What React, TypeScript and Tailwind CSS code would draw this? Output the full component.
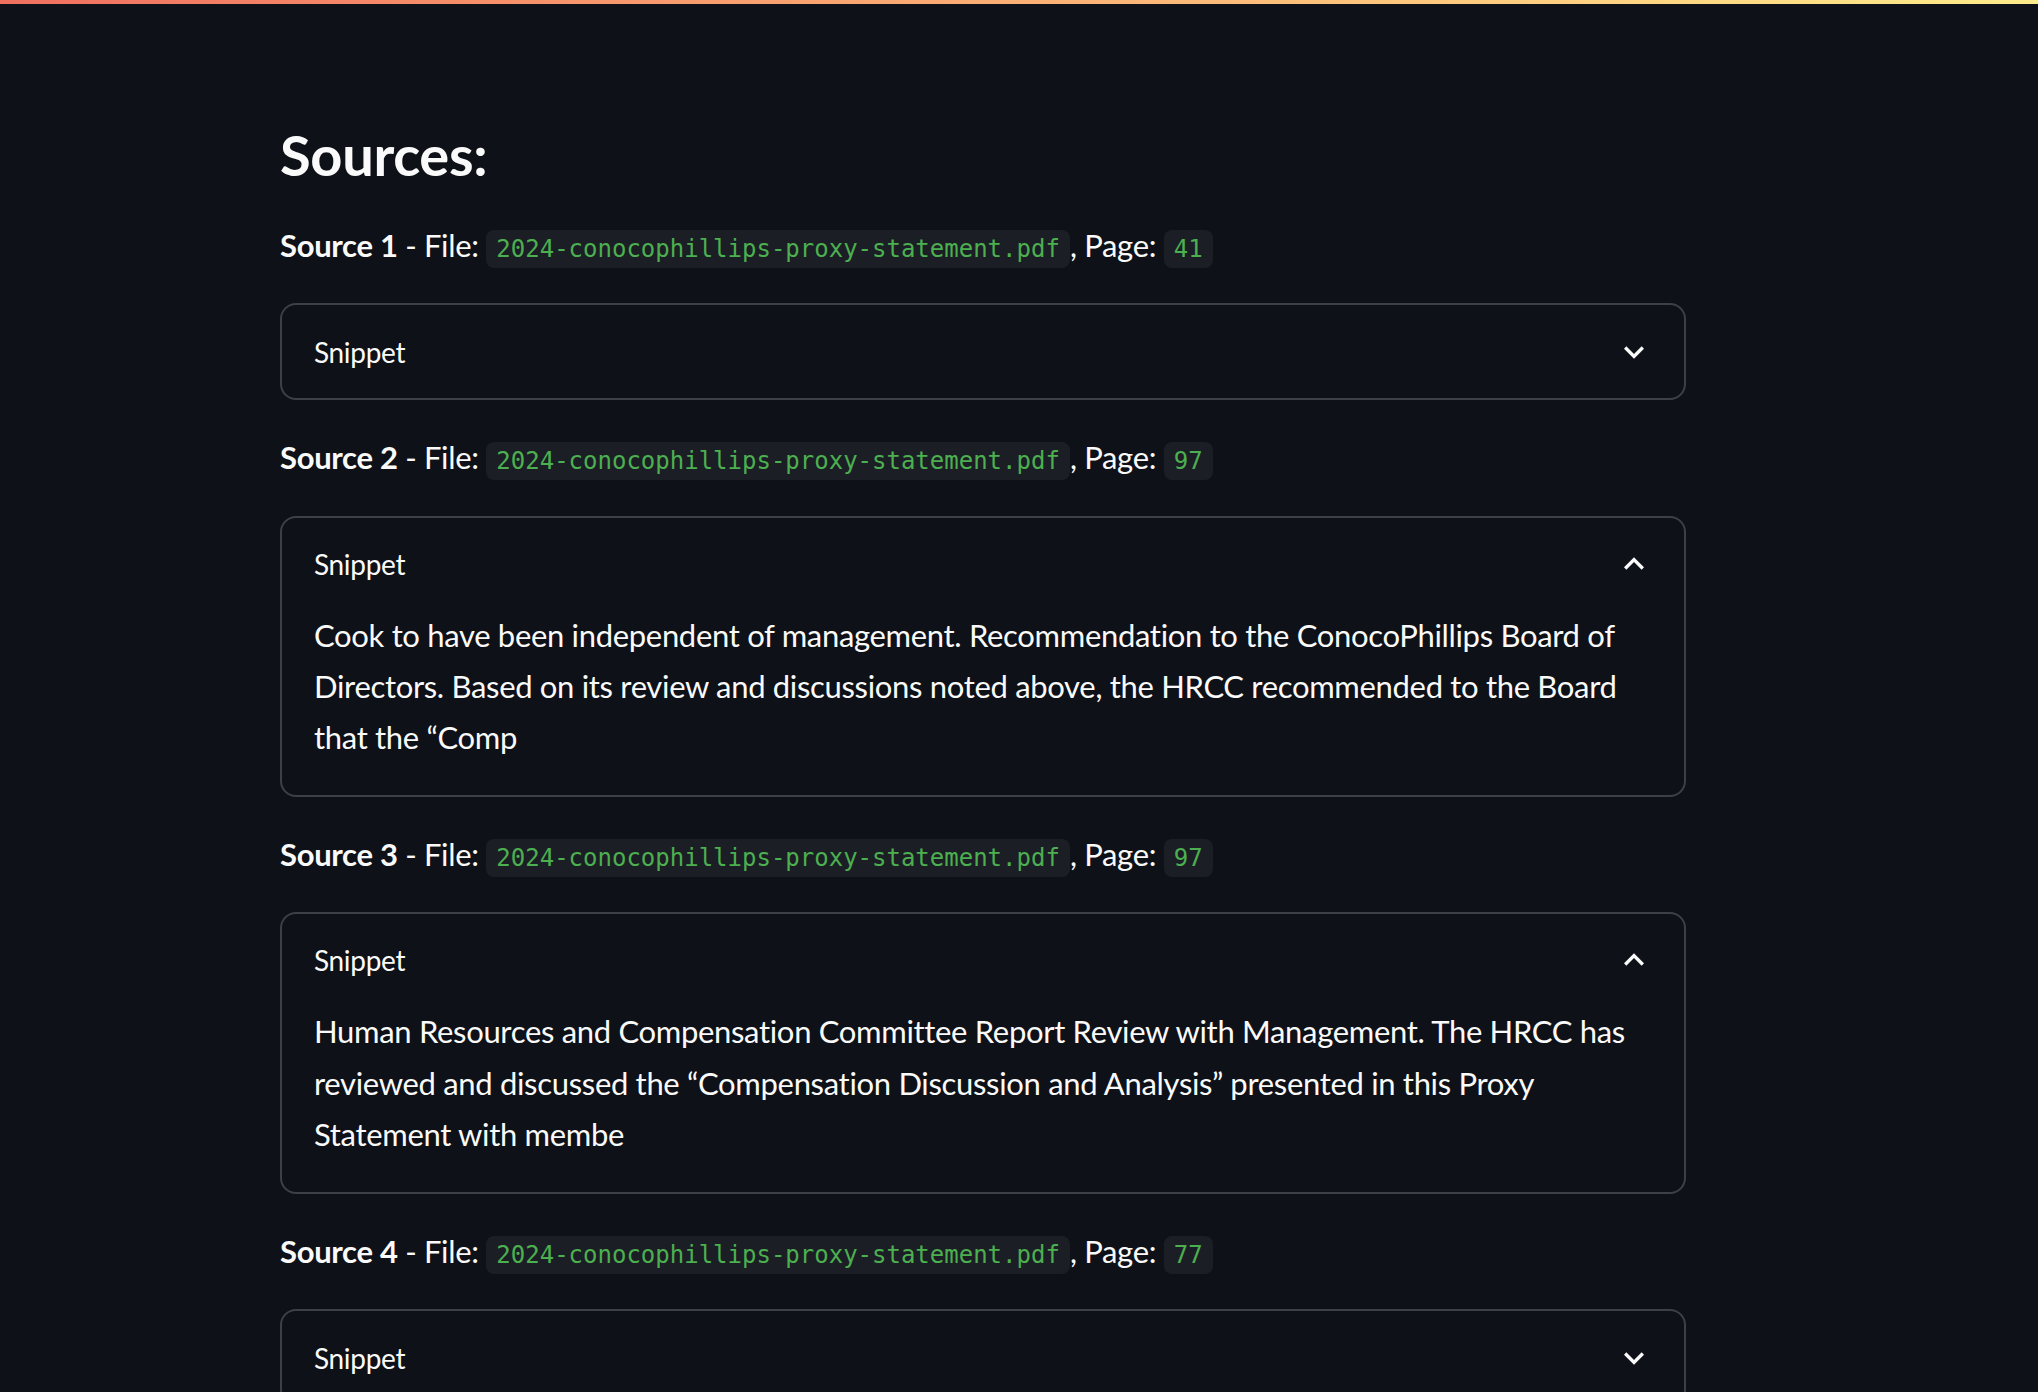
type Source = {
    page: string
    open: boolean
    text?: string
}

const FILE = '2024-conocophillips-proxy-statement.pdf'

const sources: Source[] = [
    { page: '41', open: false },
    {
        page: '97',
        open: true,
        text: 'Cook to have been independent of management. Recommendation to the ConocoPhillips Board of Directors. Based on its review and discussions noted above, the HRCC recommended to the Board that the \u201cComp',
    },
    {
        page: '97',
        open: true,
        text: 'Human Resources and Compensation Committee Report Review with Management. The HRCC has reviewed and discussed the \u201cCompensation Discussion and Analysis\u201d presented in this Proxy Statement with membe',
    },
    { page: '77', open: false },
]

// material expand_more / expand_less
const Chevron = ({ up }: { up: boolean }) => (
    <svg viewBox="0 0 24 24" className="h-[40px] w-[40px] fill-[#fafafa]">
        {up ? (
            <path d="M12 8l-6 6 1.41 1.41L12 10.83l4.59 4.58L18 14z" />
        ) : (
            <path d="M16.59 8.59L12 13.17 7.41 8.59 6 10l6 6 6-6z" />
        )}
    </svg>
)

const Code = ({ children }: { children: string }) => (
    <code className="rounded-[8px] bg-[#1c1e25] px-[10px] py-[5px] font-['DejaVu_Sans_Mono',monospace] text-[24px] leading-none tracking-normal text-[#4caf50]">
        {children}
    </code>
)

const Expander = ({ open, text }: { open: boolean; text?: string }) => (
    <div className="rounded-[16px] border-2 border-[#3d4044]">
        <div className={`flex items-center justify-between pl-[32px] pr-[30px] ${open ? 'h-[92px]' : 'h-[93px]'}`}>
            <span className="text-[28px]">Snippet</span>
            <Chevron up={open} />
        </div>
        {open && <p className="px-[32px] pb-[32px] text-[31px] leading-[51.2px]">{text}</p>}
    </div>
)

export default function App() {
    return (
        <div className="min-h-[1392px] bg-[#0e1117] font-['Lato','Noto_Sans',sans-serif] tracking-[-0.02em] text-[#fafafa]">
            {/* top decoration */}
            <div className="h-[4px] bg-gradient-to-r from-[#f07060] to-[#fdec8a]" />

            <main className="ml-[280px] w-[1406px] pt-[117px]">
                <div className="flex flex-col gap-8">
                    <h3 className="text-[56px] font-bold leading-[1.2]">Sources:</h3>

                    {sources.map((s, i) => (
                        <div key={i} className="flex flex-col gap-8">
                            <p className="text-[31px] leading-[51.2px]">
                                <strong className="font-bold">Source {i + 1}</strong> - File: <Code>{FILE}</Code>, Page:{' '}
                                <Code>{s.page}</Code>
                            </p>
                            <Expander open={s.open} text={s.text} />
                        </div>
                    ))}
                </div>
            </main>
        </div>
    )
}
